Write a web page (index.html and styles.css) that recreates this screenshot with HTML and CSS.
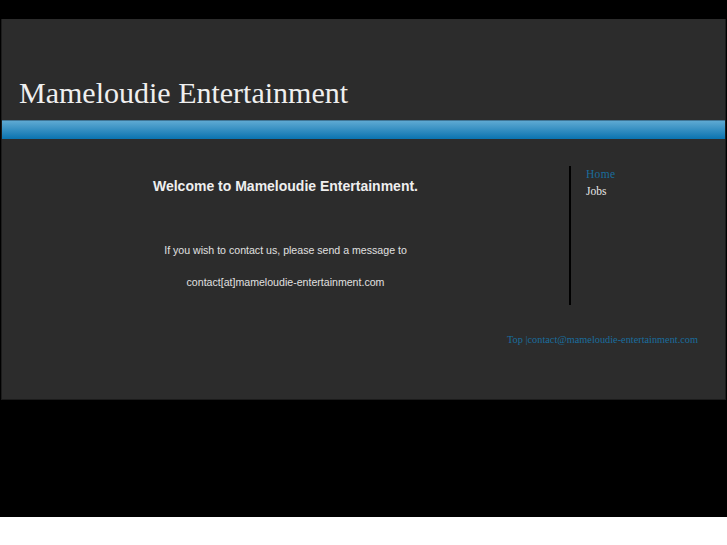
FILE: index.html
```html
<!DOCTYPE html>
<html>
<head>
<meta charset="utf-8">
<link rel="stylesheet" href="styles.css">
</head>
<body>
<div class="page">
  <div class="container">
    <div class="header">
      <h1 class="title">Mameloudie Entertainment</h1>
    </div>
    <div class="bar"></div>
    <div class="content">
      <div class="main">
        <h2 class="welcome">Welcome to Mameloudie Entertainment.</h2>
        <p class="text first">If you wish to contact us, please send a message to</p>
        <p class="text">contact[at]mameloudie-entertainment.com</p>
      </div>
      <div class="side">
        <a class="nav active" href="#">Home</a>
        <a class="nav" href="#">Jobs</a>
      </div>
    </div>
    <div class="footer"><a href="#">Top</a> |<a href="#">contact@mameloudie-entertainment.com</a></div>
  </div>
</div>
</body>
</html>
```
FILE: styles.css
```css
html, body {
  margin: 0;
  padding: 0;
  background: #ffffff;
}
.page {
  background: #000000;
  height: 517px;
  padding-top: 19px;
  box-sizing: border-box;
}
.container {
  margin-left: 1px;
  width: 723px;
  height: 380px;
  box-sizing: content-box;
  border: 1px solid #1c1c1c;
  border-top: 0;
  background: #2c2c2c;
  display: flex;
  flex-direction: column;
}
.header {
  height: 101px;
  display: flex;
  align-items: flex-end;
}
.title {
  margin: 0 0 10px 17px;
  font-family: "Liberation Serif", serif;
  font-weight: normal;
  font-size: 30px;
  line-height: 34px;
  color: #efefef;
}
.bar {
  height: 18px;
  border-top: 1px solid #3f7596;
  background: linear-gradient(#5ea9d2, #0a73b0);
}
.content {
  display: flex;
  padding-top: 27px;
}
.main {
  width: 567px;
  text-align: center;
  font-family: "Liberation Sans", Arial, sans-serif;
}
.welcome {
  margin: 12px 0 0 0;
  font-size: 14px;
  line-height: 16px;
  color: #efefef;
}
.text {
  margin: 0;
  font-size: 10.6px;
  line-height: 14px;
  color: #e0e0e0;
}
.text.first {
  margin-top: 49px;
  margin-bottom: 18px;
}
.side {
  border-left: 2px solid #000000;
  height: 139px;
  padding-left: 15px;
  padding-top: 0;
  display: flex;
  flex-direction: column;
  font-family: "Liberation Serif", serif;
  font-size: 11.5px;
  line-height: 17px;
}
.nav {
  color: #e8e8e8;
  text-decoration: none;
}
.nav.active {
  color: #1a6c9e;
  letter-spacing: 0.3px;
}
.footer {
  margin-top: 29px;
  padding-right: 27px;
  text-align: right;
  font-family: "Liberation Serif", serif;
  font-size: 10.3px;
  line-height: 12px;
  color: #1a6c9e;
}
.footer a {
  color: #1a6c9e;
  text-decoration: none;
}
```
